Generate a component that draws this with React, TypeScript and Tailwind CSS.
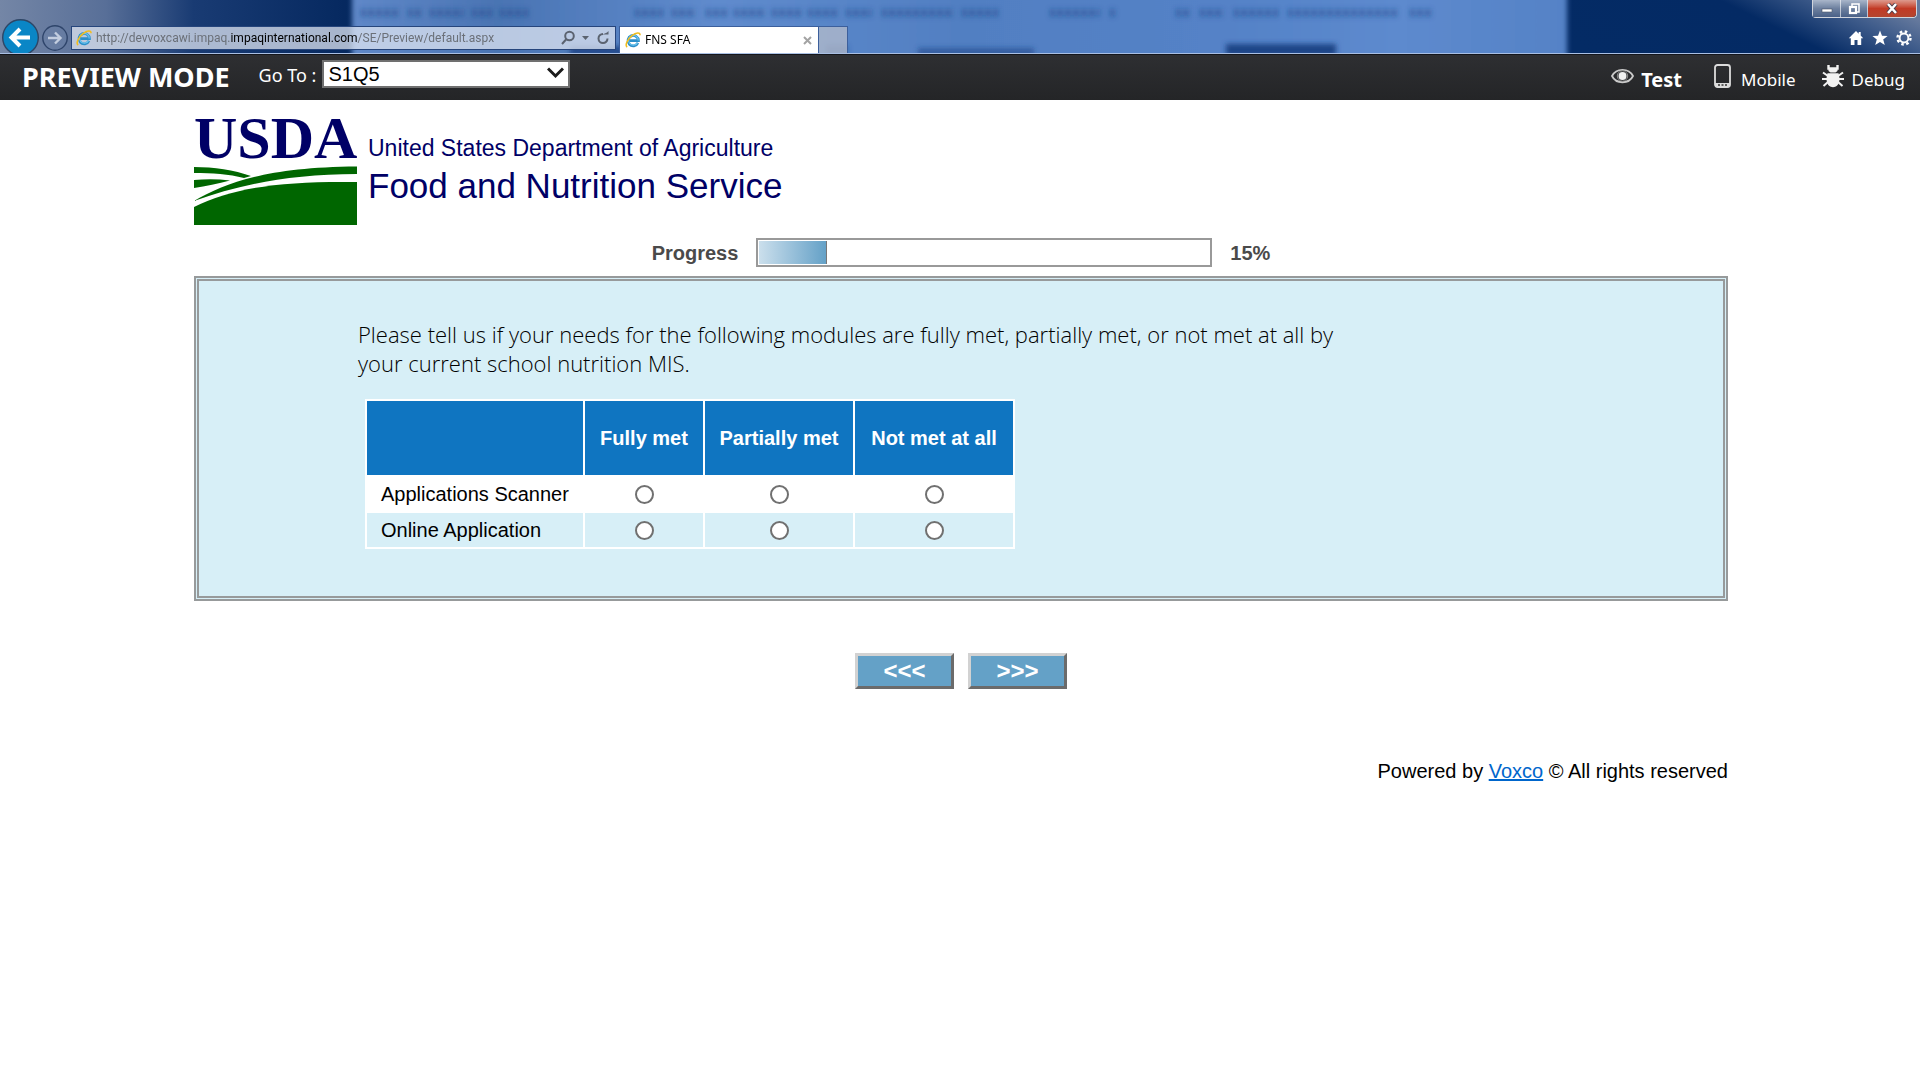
import { useState } from "react";
import type { ReactNode } from "react";

const blurredWords: [number, number][] = [
  [361, 38], [408, 14], [430, 34], [472, 20], [500, 28],
  [635, 28], [672, 24], [706, 22], [734, 32], [772, 30], [808, 30], [846, 26], [882, 72], [962, 36],
  [1050, 50], [1110, 6], [1176, 14], [1200, 24], [1234, 44], [1288, 110], [1410, 22],
];

function Backdrop() {
  return (
    <svg className="absolute inset-0 h-full w-full" viewBox="0 0 1920 54" preserveAspectRatio="none" aria-hidden="true">
      <defs>
        <linearGradient id="edgeLeft" x1="0" x2="1" y1="0" y2="0">
          <stop offset="0" stopColor="#7486a6" />
          <stop offset="0.3" stopColor="#586f98" />
          <stop offset="0.55" stopColor="#193b73" />
          <stop offset="1" stopColor="#05285f" />
        </linearGradient>
        <linearGradient id="middle" x1="0" x2="1" y1="0" y2="0">
          <stop offset="0" stopColor="#5f88c8" />
          <stop offset="0.12" stopColor="#4a74b3" />
          <stop offset="0.3" stopColor="#5f8bcd" />
          <stop offset="0.5" stopColor="#517fc2" />
          <stop offset="0.72" stopColor="#5482c7" />
          <stop offset="0.86" stopColor="#5d8ace" />
          <stop offset="1" stopColor="#5582c6" />
        </linearGradient>
        <linearGradient id="edgeRight" x1="0" x2="1" y1="0.7" y2="0.4">
          <stop offset="0" stopColor="#042b65" />
          <stop offset="0.6" stopColor="#042a64" />
          <stop offset="0.85" stopColor="#3f5c8b" />
          <stop offset="1" stopColor="#65799d" />
        </linearGradient>
        <filter id="soft" x="-10%" y="-50%" width="120%" height="200%">
          <feGaussianBlur stdDeviation="2.5" />
        </filter>
      </defs>
      <rect width="1920" height="54" fill="#04285f" />
      <rect width="352" height="54" fill="url(#edgeLeft)" />
      <rect x="1560" width="360" height="54" fill="url(#edgeRight)" />
      <rect x="352" y="-10" width="1215" height="74" fill="url(#middle)" filter="url(#soft)" />
      <g filter="url(#soft)" fill="#1c4587">
        {blurredWords.map(([x, w]) => (
          <g key={x} opacity="0.5">
            <rect x={x} y="9" width={w} height="8" opacity="0.35" />
            <path d={`M${x} 13h${w}`} stroke="#1c4587" strokeWidth="8" strokeDasharray="4 4" />
          </g>
        ))}
        <rect x="570" y="47" width="120" height="10" opacity="0.9" />
        <rect x="826" y="46" width="22" height="10" opacity="0.4" />
        <rect x="918" y="49" width="116" height="8" opacity="0.6" />
        <rect x="1226" y="45" width="110" height="12" />
      </g>
    </svg>
  );
}

function ExplorerLogo() {
  return (
    <svg className="size-4 shrink-0" viewBox="0 0 16 16" aria-hidden="true">
      <path d="M12.9 10.9A5.2 5.2 0 1 1 13.4 8.6H4.6" fill="none" stroke="#2c8fc9" strokeWidth="2.8" />
      <path d="M12.6 10.6A4.9 4.9 0 1 1 13.2 8.4" fill="none" stroke="#6cc4ee" strokeWidth="1.2" />
      <path d="M2.2 15C-.4 13.4 2.6 7 7 3.6 11 .6 15.2 0 15 3.2" fill="none" stroke="#f2bd1d" strokeWidth="1.6" />
    </svg>
  );
}

function BrowserBar() {
  return (
    <div className="relative flex h-[54px] items-start overflow-hidden border-b border-[#a9bfe3] font-['Noto_Sans',sans-serif]">
      <Backdrop />
      <div className="relative flex w-full items-start pl-0.5 pt-[19px]">
        <button aria-label="Back" className="size-[37px] shrink-0">
          <svg viewBox="0 0 37 37" className="size-full">
            <circle cx="18.5" cy="18.5" r="17.8" fill="#0a86c6" stroke="#2e4666" strokeWidth="1.4" />
            <path d="M28 18.5H10M18 10l-8.5 8.5L18 27" fill="none" stroke="#fff" strokeWidth="4" />
          </svg>
        </button>
        <button aria-label="Forward" className="ml-[3px] mt-[6px] size-[26px] shrink-0">
          <svg viewBox="0 0 26 26" className="size-full">
            <circle cx="13" cy="13" r="12.2" fill="#6a80a6" fillOpacity=".45" stroke="#2f456b" strokeWidth="1.4" />
            <path d="M6 13h12M13 7.5l5.5 5.5-5.5 5.5" fill="none" stroke="#c3cddf" strokeWidth="2.4" />
          </svg>
        </button>
        <div className="ml-[3px] mt-[7px] flex h-6 w-[545px] items-center border border-[#26457c] bg-[#dfe6f2]/75 px-1 text-[12px]">
          <ExplorerLogo />
          <div className="ml-1 flex-1 whitespace-nowrap font-['Roboto',sans-serif] text-[#6b7078]">
            http://devvoxcawi.impaq.<span className="text-black">impaqinternational.com</span>/SE/Preview/default.aspx
          </div>
          <button aria-label="Search" className="ml-1 size-4">
            <svg viewBox="0 0 16 16" fill="none" stroke="#5b6370" strokeWidth="2">
              <circle cx="9.5" cy="6" r="4.3" />
              <path d="M6.500 9L2 14" />
            </svg>
          </button>
          <svg className="ml-1.5 h-1 w-[7px]" viewBox="0 0 7 4" aria-hidden="true"><path d="M0 0h7L3.500 4z" fill="#5b6370" /></svg>
          <button aria-label="Refresh" className="ml-1.5 size-4">
            <svg viewBox="0 0 16 16">
              <path d="M12.500 8.500A4.500 4.500 0 1 1 8 4" fill="none" stroke="#5b6370" strokeWidth="2" />
              <path d="M7.500 4.500h6V1L12 2.500" fill="#5b6370" />
            </svg>
          </button>
        </div>
        <div className="ml-[3px] mt-[7px] flex h-[29px] w-[200px] items-start border-x border-t border-[#3c5f9c] bg-white pl-[5px] pr-[6px] pt-[5px] text-[12px] text-black">
          <ExplorerLogo />
          <span className="ml-1 flex-1 leading-4">FNS SFA</span>
          <button aria-label="Close tab" className="mt-1 size-[9px]">
            <svg viewBox="0 0 9 9"><path d="M1 1l7 7M8 1L1 8" stroke="#a3a3a3" strokeWidth="2" /></svg>
          </button>
        </div>
        <button aria-label="New tab" className="mt-[7px] h-[29px] w-[29px] border-r border-t border-[#3c5f9c] bg-[#b5bccb]/75" />
      </div>
      <div className="absolute right-[3px] top-0 flex h-[18px] rounded-b border-x border-b border-white/80 bg-[#1b2f55]">
        <button aria-label="Minimize" className="flex w-[28px] items-center justify-center border-r border-white/60 bg-linear-to-b from-[#a9b6ca] via-[#6d809f] to-[#4a6188]">
          <svg className="size-3" viewBox="0 0 12 12"><rect x="1" y="6" width="10" height="3" fill="#fff" stroke="#4a5568" strokeWidth=".6" /></svg>
        </button>
        <button aria-label="Restore" className="flex w-[27px] items-center justify-center border-r border-white/60 bg-linear-to-b from-[#a9b6ca] via-[#6d809f] to-[#4a6188]">
          <svg className="size-3" viewBox="0 0 12 12" fill="none">
            <path d="M4 3V1h7v8H9" stroke="#fff" strokeWidth="1.5" />
            <rect x="2" y="4" width="6" height="6" stroke="#fff" strokeWidth="2.2" />
          </svg>
        </button>
        <button aria-label="Close" className="flex w-[48px] items-center justify-center rounded-br bg-linear-to-b from-[#dd9a8e] via-[#c23a25] to-[#b4452f]">
          <svg className="h-[11px] w-3" viewBox="0 0 12 11"><path d="M2 1l8 9M10 1L2 10" stroke="#4b3b48" strokeWidth="4.2" /><path d="M2 1l8 9M10 1L2 10" stroke="#fff" strokeWidth="2.6" /></svg>
        </button>
      </div>
      <div className="absolute right-2 top-[30px] flex gap-2">
        <button aria-label="Home" className="size-4">
          <svg viewBox="0 0 16 16"><path d="M8 1L.8 8.200h2V15h3.700v-5h3v5h3.700V8.200h2L12.700 5.600V2h-2v1.700z" fill="#fff" /></svg>
        </button>
        <button aria-label="Favorites" className="size-4">
          <svg viewBox="0 0 16 16"><path d="M8 .5l2 5.300 5.600.2-4.400 3.500 1.600 5.500L8 11.900 3.200 15l1.600-5.500L.4 6 6 5.800z" fill="#fff" /></svg>
        </button>
        <button aria-label="Tools" className="size-4">
          <svg viewBox="0 0 16 16" fill="none" stroke="#fff">
            <circle cx="8" cy="8" r="4.4" strokeWidth="2" />
            <circle cx="8" cy="8" r="6.5" strokeWidth="2.4" strokeDasharray="2.55 2.55" />
          </svg>
        </button>
      </div>
    </div>
  );
}

function ModeLink({ icon, children, bold }: { icon: ReactNode; children: ReactNode; bold?: boolean }) {
  return (
    <a href="#" className={bold ? "flex items-center text-[20px] font-bold" : "flex items-center text-[17px]"}>
      {icon}
      <span className="pt-1">{children}</span>
    </a>
  );
}

function PreviewBar() {
  const [page, setPage] = useState("S1Q5");
  return (
    <header className="flex h-[46px] items-center border-t border-[#14161c] bg-linear-to-b from-[#2e2f32] to-[#242527] pl-[22px] pr-[15px] font-['Noto_Sans',sans-serif] text-white">
      <h1 className="pb-0.5 text-[27px] font-bold leading-8">PREVIEW MODE</h1>
      <label htmlFor="goto" className="ml-[29px] pb-1.5 text-[18px] leading-6">Go To :</label>
      <div className="relative mb-2 ml-[6px]">
        <select
          id="goto"
          value={page}
          onChange={(e) => setPage(e.target.value)}
          className="block h-7 w-[248px] appearance-none border-2 border-[#707070] bg-white pl-1 font-['Liberation_Sans',sans-serif] text-[20px] leading-6 text-black"
        >
          <option>S1Q5</option>
        </select>
        <svg className="pointer-events-none absolute right-[6px] top-[7px] h-3 w-[17px]" viewBox="0 0 17 12" aria-hidden="true">
          <path d="M1 1.500l7.500 7.500L16 1.500" fill="none" stroke="#1b1b1b" strokeWidth="3" />
        </svg>
      </div>
      <nav className="ml-auto flex items-center leading-6">
        <ModeLink
          bold
          icon={
            <svg className="mb-1 mr-[7px] h-4 w-[23px]" viewBox="0 0 23 16" fill="none" aria-hidden="true">
              <path d="M1 8C5-.3 18-.3 22 8 18 16.300 5 16.300 1 8z" stroke="#c9c9c9" strokeWidth="1.8" />
              <circle cx="11.5" cy="8" r="5.2" stroke="#8a8a8a" strokeWidth="1" />
              <circle cx="11.5" cy="8" r="4" fill="#f1f1f1" />
            </svg>
          }
        >
          Test
        </ModeLink>
        <div className="ml-8">
          <ModeLink
            icon={
              <svg className="mb-1 mr-2.5 h-6 w-[17px]" viewBox="0 0 17 24" fill="none" aria-hidden="true">
                <rect x="1" y="1" width="15" height="22" rx="2.5" stroke="#dcdcdc" strokeWidth="1.8" />
                <path d="M1 19h15v2a2 2 0 0 1-2 2H3a2 2 0 0 1-2-2z" fill="#dcdcdc" />
                <path d="M4 21h2M7.500 21h2M11 21h2" stroke="#333" strokeWidth="1.4" />
              </svg>
            }
          >
            Mobile
          </ModeLink>
        </div>
        <div className="ml-[26px]">
          <ModeLink
            icon={
              <svg className="mb-1 mr-2 h-6 w-[22px]" viewBox="0 0 22 24" fill="none" stroke="#f2f2f2" aria-hidden="true">
                <path d="M6.500 1v3.500h9V1" strokeWidth="2.4" />
                <path d="M6.500 4h9v3l-2 1.500h-5l-2-1.500z" fill="#f2f2f2" stroke="none" />
                <path d="M5.500 9.200h11c2 6.300 1.200 13.300-5.500 14C4.300 22.500 3.500 15.500 5.500 9.200z" fill="#f2f2f2" stroke="none" />
                <path d="M6 12L1 8.500M6 15H0M6 18l-4.500 4M16 12l5-3.500M16 15h6M16 18l4.500 4" strokeWidth="2" />
              </svg>
            }
          >
            Debug
          </ModeLink>
        </div>
      </nav>
    </header>
  );
}

function AgencyLogo() {
  return (
    <div className="flex pt-[11px] text-[#000066]">
      <div className="w-[164px]">
        <div className="whitespace-nowrap font-['Liberation_Serif',serif] text-[60px] font-bold leading-[54px]">USDA</div>
        <svg className="block h-[60px] w-[163px]" viewBox="0 0 163 60" fill="#006600" aria-hidden="true">
          <path d="M0 2C20 2 40 5 57 11L50 13C35 9 18 8 0 8z" />
          <path d="M0 15C12 14 24 14 36 15.500C24 19 12 21 0 23z" />
          <path d="M0 36C30 19 70 2 163 1.500V9C95 9 45 20 0 36z" />
          <path d="M0 42C40 22 90 16 163 17V60H0z" />
        </svg>
      </div>
      <div className="ml-[10px] pt-[21px] font-['Liberation_Sans',sans-serif]">
        <div className="text-[23px] leading-8">United States Department of Agriculture</div>
        <div className="mt-0.5 text-[35px] leading-10">Food and Nutrition Service</div>
      </div>
    </div>
  );
}

const choices = ["Fully met", "Partially met", "Not met at all"];
const modules = ["Applications Scanner", "Online Application"];

function ModuleTable() {
  const [answers, setAnswers] = useState<Record<string, string>>({});
  return (
    <table className="ml-[7px] mt-[21px] table-fixed border-collapse text-[20px] leading-6">
      <colgroup>
        <col className="w-[218px]" />
        <col className="w-[120px]" />
        <col className="w-[150px]" />
        <col className="w-[160px]" />
      </colgroup>
      <thead>
        <tr className="h-[76px] bg-[#0f75c1] text-white">
          <td className="border-2 border-white" />
          {choices.map((c) => (
            <th key={c} scope="col" className="whitespace-nowrap border-2 border-white font-bold">{c}</th>
          ))}
        </tr>
      </thead>
      <tbody>
        {modules.map((m) => (
          <tr key={m} className="h-9 odd:bg-white even:bg-[#d7eff7]">
            <th scope="row" className="whitespace-nowrap border-2 border-white pl-3.5 text-left font-normal">{m}</th>
            {choices.map((c) => (
              <td key={c} className="border-2 border-white">
                <input
                  type="radio"
                  name={m}
                  aria-label={`${m}: ${c}`}
                  checked={answers[m] === c}
                  onChange={() => setAnswers({ ...answers, [m]: c })}
                  className="mx-auto block size-[19px] appearance-none rounded-full border-2 border-[#707070] bg-white checked:bg-[#333] checked:shadow-[inset_0_0_0_3px_#fff]"
                />
              </td>
            ))}
          </tr>
        ))}
      </tbody>
    </table>
  );
}

const navButton =
  "h-9 w-[99px] border-3 border-t-[#d2d2d2] border-l-[#d2d2d2] border-b-[#6b6b6b] border-r-[#6b6b6b] bg-[#64a1c7] text-[24px] font-bold leading-7 text-white";

export default function App() {
  return (
    <div className="min-h-screen bg-white font-['Liberation_Sans',sans-serif] text-black">
      <BrowserBar />
      <PreviewBar />
      <main className="mx-auto w-4/5 pl-0.5">
        <AgencyLogo />
        <div className="mt-[13px] flex h-[29px] items-center justify-center text-[20px] font-bold leading-7 text-[#4a4a4a]">
          <span id="progress-label">Progress</span>
          <div
            role="progressbar"
            aria-labelledby="progress-label"
            aria-valuenow={15}
            aria-valuemin={0}
            aria-valuemax={100}
            className="mx-[18px] h-[29px] w-[456px] border-2 border-[#999] p-px"
          >
            <div className="h-full w-[15%] border-r border-[#777] bg-linear-to-r from-[#cbdfec] to-[#64a1c7]" />
          </div>
          <span>15%</span>
        </div>
        <section className="mt-[9px] h-[325px] border-5 border-double border-[#979a9b] bg-[#d7eff7] pl-[159px] pt-[39px]">
          <p className="w-[980px] font-['Open_Sans',sans-serif] text-[22px] font-light leading-[29px]">
            Please tell us if your needs for the following modules are fully met, partially met, or not met at all by your current school nutrition MIS.
          </p>
          <ModuleTable />
        </section>
        <div className="mt-[52px] flex justify-center gap-3.5">
          <button aria-label="Previous" className={navButton}>&lt;&lt;&lt;</button>
          <button aria-label="Next" className={navButton}>&gt;&gt;&gt;</button>
        </div>
        <footer className="mt-[70px] text-right text-[20px] leading-6">
          Powered by <a href="#" className="text-[#0066cc] underline">Voxco</a> © All rights reserved
        </footer>
      </main>
    </div>
  );
}
